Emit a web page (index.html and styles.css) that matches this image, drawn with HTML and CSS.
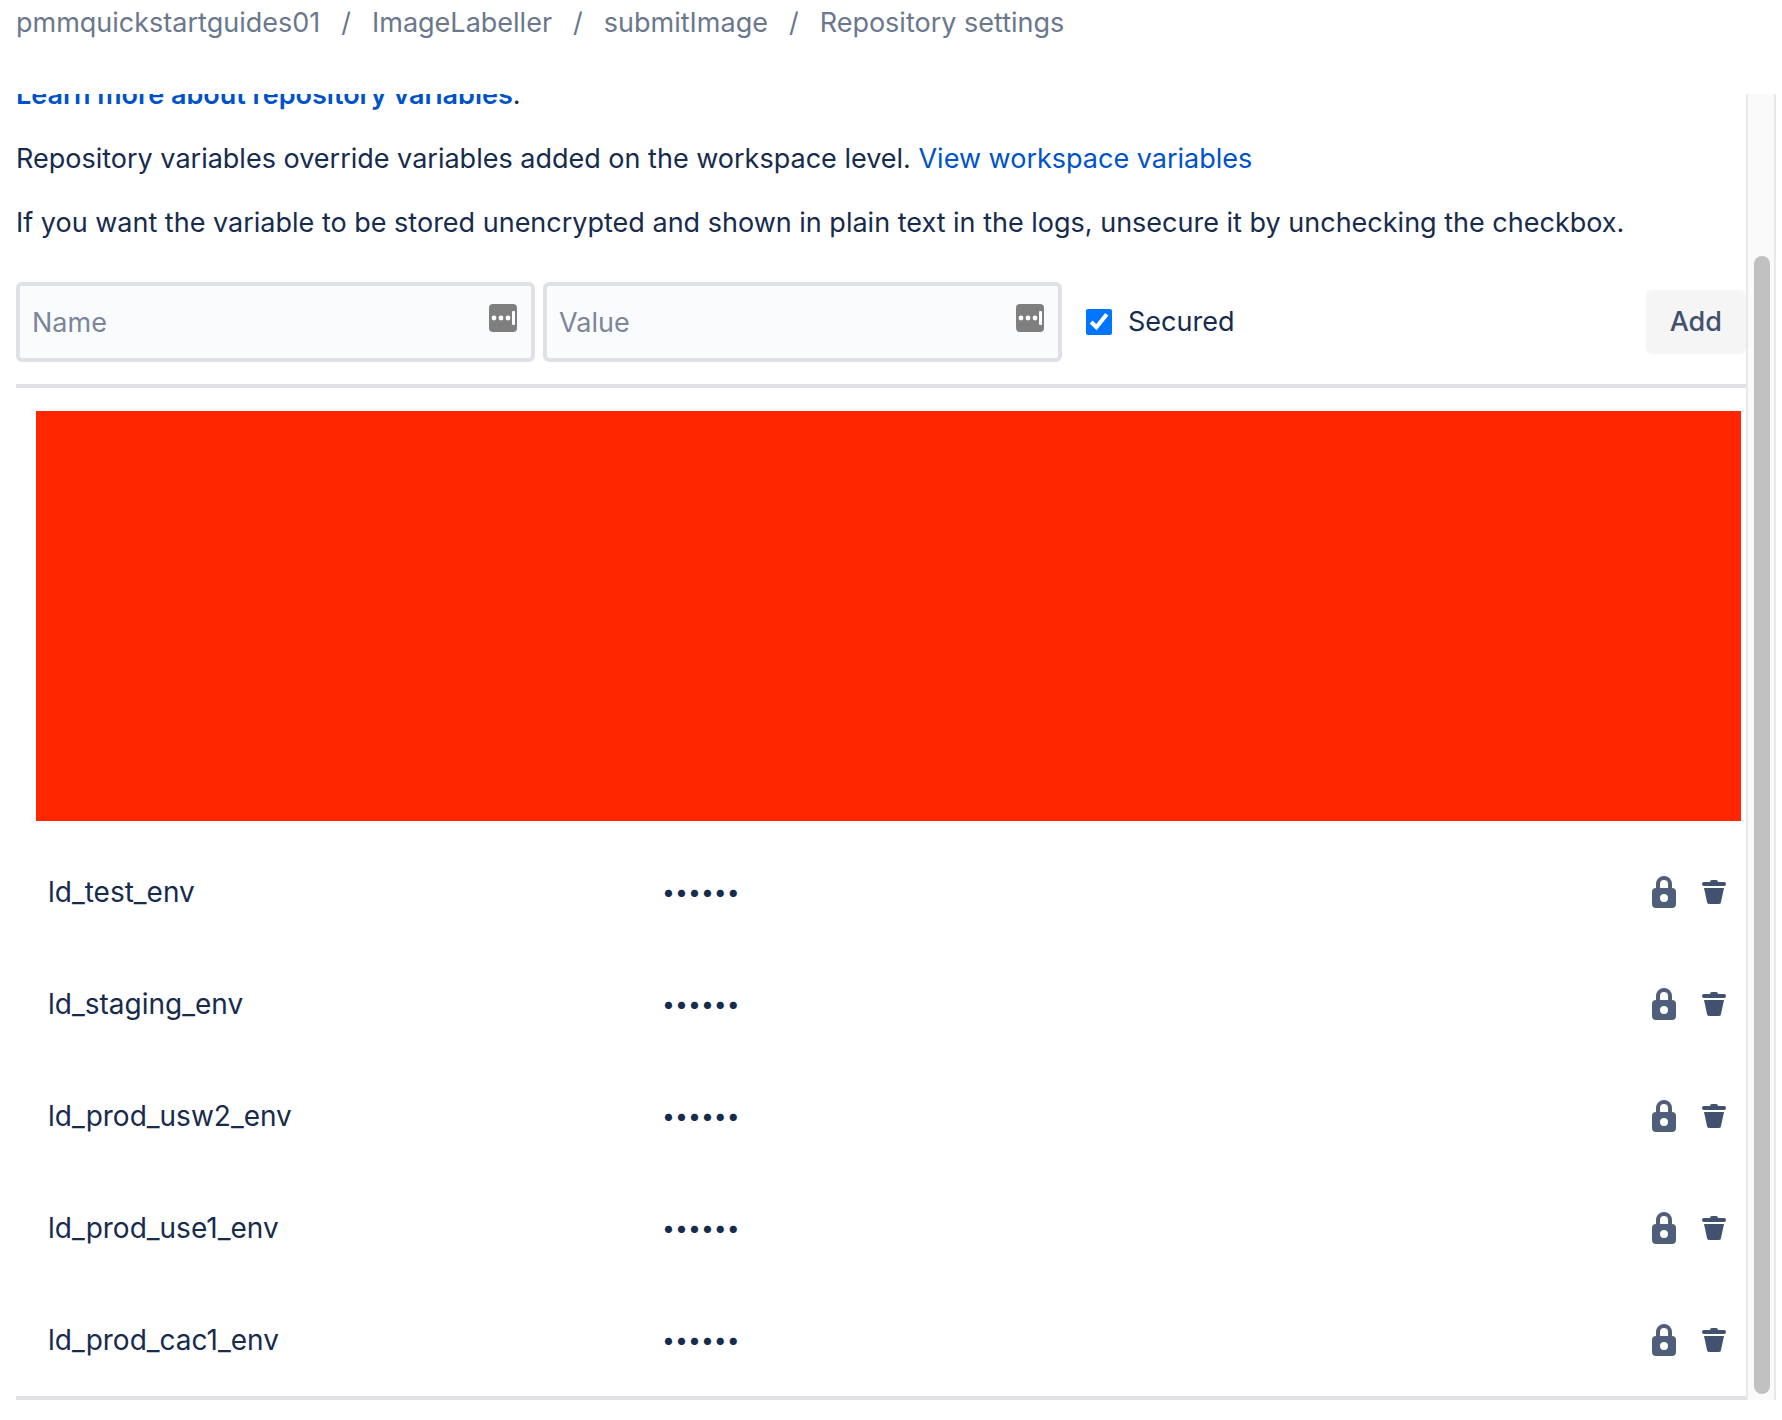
FILE: index.html
```
<!DOCTYPE html>
<html lang="en">
<head>
    <meta charset="UTF-8">
    <meta name="viewport" content="width=device-width, initial-scale=1.0">
    <title>Repository settings</title>
    <link rel="stylesheet" href="styles.css">
</head>
<body>
    <!-- shared icons -->
    <svg class="sprite" aria-hidden="true">
        <symbol id="icon-lock" viewBox="0 0 24 32">
            <path fill-rule="evenodd" d="M4 12V8a8 8 0 0 1 16 0v4a4 4 0 0 1 4 4v12a4 4 0 0 1-4 4H4a4 4 0 0 1-4-4V16a4 4 0 0 1 4-4zM8 12h8V8a4 4 0 0 0-8 0zM12 18a4 4 0 1 0 0 8 4 4 0 0 0 0-8z"/>
        </symbol>
        <symbol id="icon-trash" viewBox="0 0 24 24">
            <path d="M2 2h6a2 2 0 0 1 2-2h4a2 2 0 0 1 2 2h6a2 2 0 0 1 0 4H2a2 2 0 0 1 0-4zM2 8h20l-3 14a2 2 0 0 1-2 2H7a2 2 0 0 1-2-2z"/>
        </symbol>
        <symbol id="icon-manager" viewBox="0 0 28 28">
            <rect width="28" height="28" rx="4" fill="#7f7f7f"/>
            <circle cx="5" cy="14" r="2.4" fill="#fff"/>
            <circle cx="12" cy="14" r="2.4" fill="#fff"/>
            <circle cx="19" cy="14" r="2.4" fill="#fff"/>
            <rect x="23" y="7" width="3" height="14" rx="1" fill="#fff"/>
        </symbol>
    </svg>

    <nav class="breadcrumbs" aria-label="Breadcrumbs">
        <a href="#">pmmquickstartguides01</a>
        <span>/</span>
        <a href="#">ImageLabeller</a>
        <span>/</span>
        <a href="#">submitImage</a>
        <span>/</span>
        <a href="#">Repository settings</a>
    </nav>

    <div class="panel">
        <main class="content">
            <div class="intro">
                <p><a class="strong" href="#">Learn more about repository variables</a>.</p>
                <p>Repository variables override variables added on the workspace level. <a href="#">View workspace variables</a></p>
                <p>If you want the variable to be stored unencrypted and shown in plain text in the logs, unsecure it by unchecking the checkbox.</p>
            </div>

            <form class="add-form">
                <div class="field">
                    <input type="text" name="name" placeholder="Name" aria-label="Name">
                    <svg class="manager"><use href="#icon-manager"/></svg>
                </div>
                <div class="field">
                    <input type="text" name="value" placeholder="Value" aria-label="Value">
                    <svg class="manager"><use href="#icon-manager"/></svg>
                </div>
                <div class="secured">
                    <input type="checkbox" id="secured" checked>
                    <label for="secured">Secured</label>
                </div>
                <button type="button" class="add-btn">Add</button>
            </form>

            <div class="variables">
                <div class="redacted"></div>
                <table>
                    <tbody>
                        <tr>
                            <td class="name">ld_test_env</td>
                            <td class="value">••••••</td>
                            <td class="actions"><div>
                                <svg class="lock" role="img" aria-label="Secured"><use href="#icon-lock"/></svg>
                                <button type="button" aria-label="Delete ld_test_env"><svg class="trash"><use href="#icon-trash"/></svg></button>
                            </div></td>
                        </tr>
                        <tr>
                            <td class="name">ld_staging_env</td>
                            <td class="value">••••••</td>
                            <td class="actions"><div>
                                <svg class="lock" role="img" aria-label="Secured"><use href="#icon-lock"/></svg>
                                <button type="button" aria-label="Delete ld_staging_env"><svg class="trash"><use href="#icon-trash"/></svg></button>
                            </div></td>
                        </tr>
                        <tr>
                            <td class="name">ld_prod_usw2_env</td>
                            <td class="value">••••••</td>
                            <td class="actions"><div>
                                <svg class="lock" role="img" aria-label="Secured"><use href="#icon-lock"/></svg>
                                <button type="button" aria-label="Delete ld_prod_usw2_env"><svg class="trash"><use href="#icon-trash"/></svg></button>
                            </div></td>
                        </tr>
                        <tr>
                            <td class="name">ld_prod_use1_env</td>
                            <td class="value">••••••</td>
                            <td class="actions"><div>
                                <svg class="lock" role="img" aria-label="Secured"><use href="#icon-lock"/></svg>
                                <button type="button" aria-label="Delete ld_prod_use1_env"><svg class="trash"><use href="#icon-trash"/></svg></button>
                            </div></td>
                        </tr>
                        <tr>
                            <td class="name">ld_prod_cac1_env</td>
                            <td class="value">••••••</td>
                            <td class="actions"><div>
                                <svg class="lock" role="img" aria-label="Secured"><use href="#icon-lock"/></svg>
                                <button type="button" aria-label="Delete ld_prod_cac1_env"><svg class="trash"><use href="#icon-trash"/></svg></button>
                            </div></td>
                        </tr>
                    </tbody>
                </table>
            </div>
        </main>
        <div class="scrollbar"><div class="thumb"></div></div>
    </div>
</body>
</html>
```

FILE: styles.css
```
* {
    box-sizing: border-box;
}
body {
    margin: 0;
    background: #fff;
    color: #172b4d;
    font-family: Inter, "Liberation Sans", sans-serif;
    font-size: 27px;
    line-height: 40px;
}
a {
    color: #0052cc;
    text-decoration: none;
}
.sprite {
    display: none;
}
.breadcrumbs {
    display: flex;
    gap: 21px;
    height: 94px;
    padding: 3px 16px;
    color: #6b778c;
}
.breadcrumbs a {
    color: inherit;
}

/* scrolled area */
.panel {
    display: flex;
    margin-right: 6px;
    padding-left: 16px;
    overflow: hidden;
}
.content {
    flex: 1;
    min-width: 0;
}
.intro {
    margin-top: -19px;
}
.intro p {
    margin: 0 0 24px;
}
.intro .strong {
    font-weight: 600;
}

.add-form {
    display: flex;
    align-items: center;
    gap: 8px;
    padding: 15px 0 22px;
    border-bottom: 4px solid #dfe1e6;
}
.field {
    position: relative;
    flex: 0 1 30%;
}
.field input {
    display: block;
    width: 100%;
    height: 80px;
    padding: 0 56px 0 12px;
    border: 4px solid #dfe1e6;
    border-radius: 6px;
    background: #fafbfc;
    color: inherit;
    font: inherit;
}
.field input::placeholder {
    color: #7a869a;
    opacity: 1;
}
.manager {
    position: absolute;
    top: 22px;
    right: 18px;
    width: 28px;
    height: 28px;
}
.secured {
    display: flex;
    align-items: center;
    gap: 16px;
    margin-left: 16px;
}
.secured input {
    width: 26px;
    height: 26px;
    margin: 0;
    accent-color: #0075ff;
}
.add-btn {
    height: 64px;
    margin-left: auto;
    padding: 0 24px;
    border: none;
    border-radius: 6px;
    background: #f5f5f5;
    color: #42526e;
    font: inherit;
    font-weight: 500;
}

.variables {
    border-bottom: 4px solid #dfe1e6;
}
.redacted {
    height: 410px;
    margin: 23px 5px 15px 20px;
    background: #ff2600;
}
table {
    width: 100%;
    table-layout: fixed;
    border-collapse: collapse;
}
td {
    height: 112px;
    padding: 0;
}
.name {
    width: 37%;
    padding-left: 32px;
    font-size: 28px;
}
.value {
    padding-left: 6px;
    font-size: 23px;
}
.actions {
    width: 120px;
}
.actions div {
    display: flex;
    align-items: center;
    justify-content: flex-end;
    gap: 26px;
    padding-right: 20px;
}
.actions button {
    display: flex;
    padding: 0;
    border: none;
    background: none;
}
.lock {
    width: 24px;
    height: 32px;
    fill: #505f79;
}
.trash {
    width: 24px;
    height: 24px;
    fill: #42526e;
}

.scrollbar {
    width: 30px;
    padding: 162px 4px 6px 6px;
    border: solid #e8e8e8;
    border-width: 0 2px;
    background: #fafafa;
}
.thumb {
    width: 16px;
    height: 100%;
    border-radius: 8px;
    background: #c1c1c1;
}
```
